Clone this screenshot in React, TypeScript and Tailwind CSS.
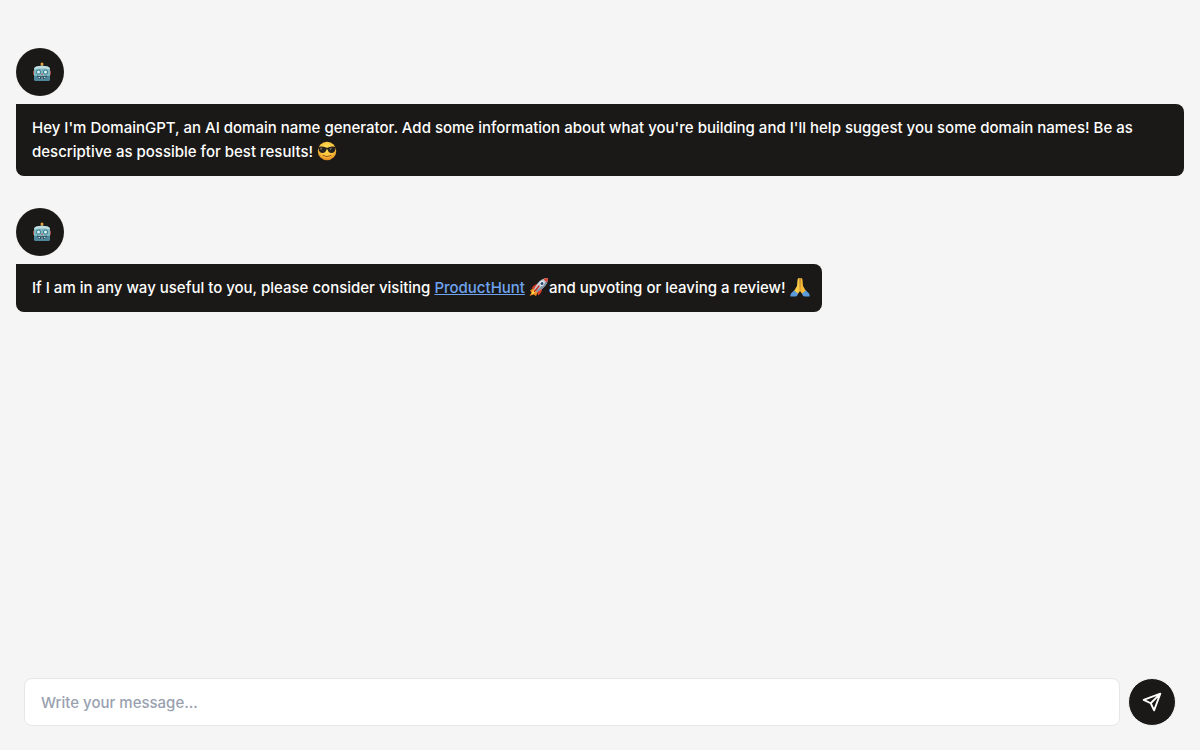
import type { ReactNode } from "react";

function Robot() {
  return (
    <svg viewBox="0 0 40 40" className="ml-1 h-5 w-5" role="img" aria-label="Robot">
      <rect x="18" y="4" width="4" height="6" fill="#a56a35" />
      <circle cx="20" cy="4" r="3" fill="#e5a13a" />
      <rect x="2" y="17" width="4" height="9" rx="2" fill="#a8473c" />
      <rect x="34" y="17" width="4" height="9" rx="2" fill="#a8473c" />
      <path d="M9 9Q20 6 31 9Q36 10 36 16V33Q36 38 31 38H9Q4 38 4 33V16Q4 10 9 9Z" fill="#7fb7c2" />
      <path d="M9 9Q20 6 31 9Q36 10 36 15Q20 11 4 15Q4 10 9 9Z" fill="#c0dde0" />
      <path d="M4 28H36V33Q36 38 31 38H9Q4 38 4 33Z" fill="#4d8799" />
      <circle cx="13" cy="20" r="5" fill="#3f7f90" />
      <circle cx="27" cy="20" r="5" fill="#3f7f90" />
      <circle cx="13" cy="20" r="3" fill="#d9f5f6" />
      <circle cx="27" cy="20" r="3" fill="#d9f5f6" />
      <path d="M20 22L22 26H18Z" fill="#c4564c" />
      <path d="M10 27Q20 31 30 27Q30 34 20 34Q10 34 10 27Z" fill="#28495b" />
      <path d="M13 29.500L16 30.500V32.500L13 31.500ZM18.500 31H21.500V33H18.500ZM27 29.500L24 30.500V32.500L27 31.500Z" fill="#e2eef0" />
    </svg>
  );
}

function Sunglasses() {
  return (
    <svg viewBox="0 0 40 40" className="inline-block h-5 w-5 align-[-4px]" role="img" aria-label="Smiling face with sunglasses">
      <defs>
        <radialGradient id="face" cx="50%" cy="35%" r="65%">
          <stop offset="0" stopColor="#ffe45c" />
          <stop offset="0.7" stopColor="#f9bc36" />
          <stop offset="1" stopColor="#dc8521" />
        </radialGradient>
      </defs>
      <circle cx="20" cy="20" r="18.500" fill="url(#face)" />
      <path d="M2 12Q10 10 18 13Q20 14 22 13Q30 10 38 12L37 15Q36 24 29 24Q23 24 21 17Q20 16 19 17Q17 24 11 24Q4 24 3 15Z" fill="#26211e" />
      <path d="M6 14L11 13L8 19ZM25 15L30 13L27 19Z" fill="#77706a" />
      <path d="M12 29Q20 34 28 29" fill="none" stroke="#9a5a20" strokeWidth="2" strokeLinecap="round" />
    </svg>
  );
}

function Rocket() {
  return (
    <svg viewBox="0 0 40 40" className="inline-block h-5 w-5 align-[-4px]" role="img" aria-label="Rocket">
      <path d="M9 22L2 27L5 31L1 38L9 35L14 38L18 30Z" fill="#f28b22" />
      <path d="M10 26L6 30L5 35L11 32L15 29Z" fill="#ffdf52" />
      <path d="M17 14Q10 14 5 23L14 23ZM26 23Q27 31 18 37L17 27Z" fill="#d83a2b" />
      <path d="M38 2Q25 2 17 13L10 24L16 30L27 23Q38 14 38 2Z" fill="#c5ced8" />
      <path d="M38 2Q38 14 27 23L16 30L13 27Q31 17 38 2Z" fill="#8294a8" />
      <path d="M38 2Q33 2 29 4Q32 9 36 11Q38 7 38 2Z" fill="#d94436" />
      <circle cx="26" cy="13" r="4.500" fill="#f2f5f7" />
      <circle cx="26" cy="13" r="3" fill="#274b72" />
      <path d="M20 18L11 29" stroke="#c52f28" strokeWidth="3" strokeLinecap="round" />
    </svg>
  );
}

function FoldedHands() {
  return (
    <svg viewBox="0 0 40 40" className="inline-block h-5 w-5 align-[-4px]" role="img" aria-label="Folded hands">
      <path d="M19.500 2Q15 1 15 6L14 18L8 28L14 36L20 28Z" fill="#fbcb4a" />
      <path d="M20.500 2Q25 1 25 6L26 18L32 28L26 36L20 28Z" fill="#f6b938" />
      <path d="M20 4V28" stroke="#d08a2a" strokeWidth="1.500" />
      <path d="M8 27L16 33Q15 38 11 39H1Q0 36 2 33Z" fill="#5a9bdc" />
      <path d="M32 27L24 33Q25 38 29 39H39Q40 36 38 33Z" fill="#5a9bdc" />
    </svg>
  );
}

function Message({ children }: { children: ReactNode }) {
  return (
    <article className="flex flex-col items-start gap-2">
      <div className="flex h-12 w-12 items-center justify-center rounded-full bg-[#1a1917]">
        <Robot />
      </div>
      <p className="rounded-lg rounded-tl-none bg-[#1a1917] py-3 pr-3 pl-4 text-[15px] leading-6 font-medium text-white">
        {children}
      </p>
    </article>
  );
}

export default function App() {
  return (
    <div className="flex min-h-screen flex-col bg-[#f5f5f5] font-['Inter',sans-serif]">
      <main className="flex flex-1 flex-col gap-8 px-4 pt-12">
        <Message>
          Hey I'm DomainGPT, an AI domain name generator. Add some information about what you're building and I'll
          help suggest you some domain names! Be as descriptive as possible for best results! <Sunglasses />
        </Message>
        <Message>
          If I am in any way useful to you, please consider visiting{" "}
          <a href="https://www.producthunt.com" className="text-[#6ea3f0] underline">ProductHunt</a> <Rocket />
          and upvoting or leaving a review! <FoldedHands />
        </Message>
      </main>
      <form className="flex items-center gap-2 p-6" onSubmit={(e) => e.preventDefault()}>
        <input
          type="text"
          aria-label="Message"
          placeholder="Write your message..."
          className="h-12 min-w-0 flex-1 rounded-lg border border-gray-200 bg-white px-4 text-[15px] font-medium text-gray-900 placeholder:text-gray-400"
        />
        <button type="submit" aria-label="Send" className="flex h-12 w-12 items-center justify-center rounded-full border border-[#f5f5f5] bg-[#1a1917] text-white">
          <svg viewBox="0 0 24 24" className="h-5 w-5" fill="none" stroke="currentColor" strokeWidth="2.200" strokeLinecap="round" strokeLinejoin="round">
            <path d="M22 2L10.500 13.500M22 2L14.500 22L10.500 13.500L2 9.500Z" />
          </svg>
        </button>
      </form>
    </div>
  );
}
